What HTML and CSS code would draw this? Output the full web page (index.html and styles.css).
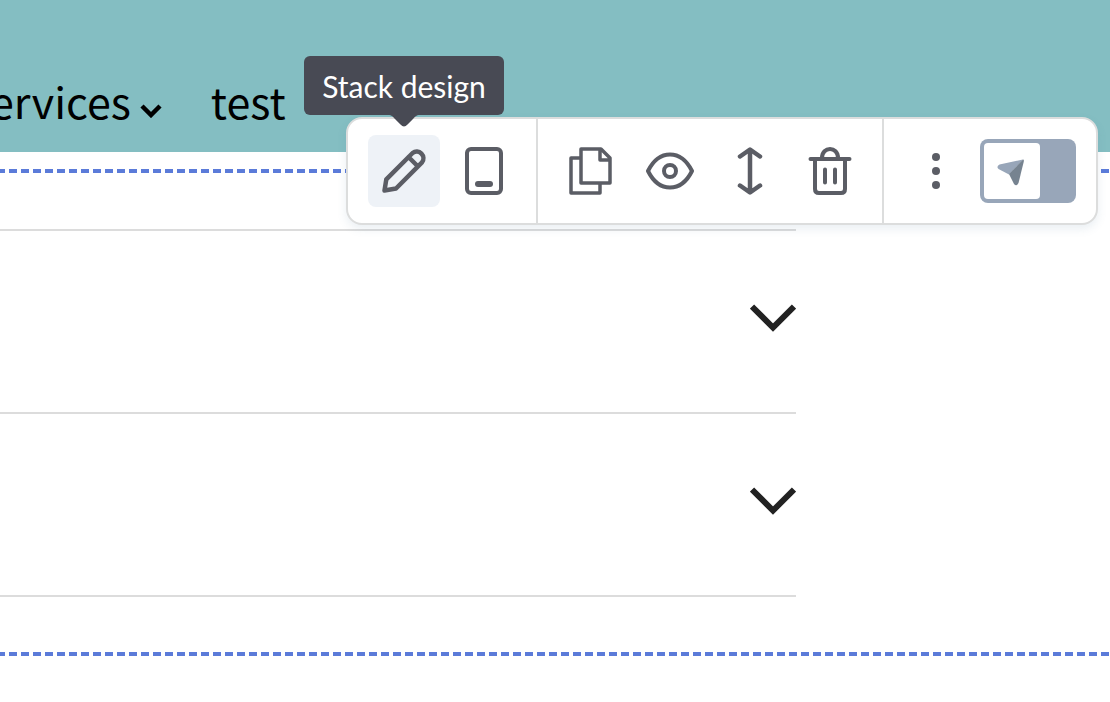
FILE: index.html
```html
<!DOCTYPE html>
<html lang="en">
<head>
<meta charset="utf-8">
<title>Page editor</title>
<link rel="stylesheet" href="styles.css">
</head>
<body>
<header class="site-header">
  <nav class="nav" aria-label="Main">
    <a class="nav-link" href="#services">ervices
      <svg class="nav-caret" viewBox="0 0 24 14" aria-hidden="true"><path d="M3 2l9 9 9-9" fill="none" stroke="currentColor" stroke-width="4.500"/></svg>
    </a>
    <a class="nav-link" href="#test">test</a>
  </nav>
</header>

<main class="stack">
  <div class="accordion">
    <button class="accordion-row" type="button" aria-label="Expand first item">
      <svg class="chevron" viewBox="0 0 46 28" aria-hidden="true"><path d="M2 2.500l21 21 21-21" fill="none" stroke="currentColor" stroke-width="6"/></svg>
    </button>
    <button class="accordion-row" type="button" aria-label="Expand second item">
      <svg class="chevron" viewBox="0 0 46 28" aria-hidden="true"><path d="M2 2.500l21 21 21-21" fill="none" stroke="currentColor" stroke-width="6"/></svg>
    </button>
  </div>

  <div class="toolbar" role="toolbar" aria-label="Stack tools">
    <div class="group group-first">
      <button class="tool tool-active" type="button" aria-labelledby="design-tip">
        <svg class="icon" viewBox="0 0 48 48" aria-hidden="true"><path stroke-width="4.500" d="M4.500 43.500L6.300 32.300L32.600 6A6.700 6.700 0 0 1 42 15.400L16 41.500zM28.500 10L38 19.500"/></svg>
        <span class="tooltip" id="design-tip" role="tooltip">Stack design
          <svg class="tooltip-arrow" viewBox="0 0 32 12" aria-hidden="true"><path d="M0 0c4 0 5 2 7 4l5.500 5.500q3.500 4 7 0L25 4c2-2 3-4 7-4z"/></svg>
        </span>
      </button>
      <button class="tool" type="button" aria-label="Mobile view">
        <svg class="icon" viewBox="0 0 48 48" aria-hidden="true"><rect x="7" y="2" width="34" height="44" rx="4"/><path d="M18 37h12" stroke-width="6"/></svg>
      </button>
    </div>
    <div class="group">
      <button class="tool" type="button" aria-label="Duplicate">
        <svg class="icon" viewBox="0 0 48 48" aria-hidden="true"><path stroke-width="3.500" d="M14 11H5v35h29V37M15 2h20l9 9v25H15zM34 2v11H44"/></svg>
      </button>
      <button class="tool" type="button" aria-label="Hide">
        <svg class="icon" viewBox="0 0 48 48" aria-hidden="true"><path d="M2 24C13 2 35 2 46 24C35 46 13 46 2 24z"/><circle cx="24" cy="24" r="6"/></svg>
      </button>
      <button class="tool" type="button" aria-label="Move">
        <svg class="icon" viewBox="0 0 48 48" aria-hidden="true"><path stroke-width="4.500" d="M24 3v42M14 9.500L24 2.500l10 7M14 38.500L24 45.500l10-7"/></svg>
      </button>
      <button class="tool" type="button" aria-label="Delete">
        <svg class="icon" viewBox="0 0 48 48" aria-hidden="true"><path d="M4.500 12h39M9 12v30q0 4 4 4h22q4 0 4-4V12M16 11c0-12 16-12 16 0M19 22.500v13M29 22.500v13"/></svg>
      </button>
    </div>
    <div class="group group-last">
      <button class="tool" type="button" aria-label="More options">
        <svg class="dots" viewBox="0 0 48 48" aria-hidden="true"><circle cx="24" cy="10" r="4"/><circle cx="24" cy="24" r="4"/><circle cx="24" cy="38" r="4"/></svg>
      </button>
      <label class="switch">
        <input class="switch-input" type="checkbox" role="switch" aria-label="Navigator mode">
        <span class="knob">
          <svg class="plane" viewBox="0 0 32 32" aria-hidden="true"><path fill="#98a6b9" d="M27 4.500L3.500 9.500Q0 11.500 2.500 14L13 19.500z"/><path fill="#768390" d="M27 4.500q1.200 0 .800 2L22.500 28q-2 4-4.500 1L13 19z"/></svg>
        </span>
      </label>
    </div>
  </div>
</main>
</body>
</html>
```
FILE: styles.css
```css
* {
  box-sizing: border-box;
}

body {
  margin: 0;
  background: #fff;
  overflow-x: hidden;
}

button {
  border: 0;
  margin: 0;
  padding: 0;
  background: none;
  cursor: pointer;
}

.site-header {
  padding: 68px 0 20px;
  background: #84bec2;
  overflow: hidden;
}

.nav {
  display: flex;
  gap: 48px;
  margin-left: -10px;
}

.nav-link {
  display: flex;
  align-items: center;
  gap: 8px;
  color: #000;
  font: 43px/64px "Noto Sans CJK JP", "Noto Sans", sans-serif;
  text-decoration: none;
}

.nav-caret {
  width: 24px;
  height: 14px;
  margin-top: 22px;
}

.stack {
  position: relative;
  margin-top: 17px;
  padding: 60px 0 59px;
  background:
    repeating-linear-gradient(90deg, #5b7bd9 0 8px, transparent 8px 12px) -3px 0 / 1200px 4px repeat-x,
    repeating-linear-gradient(90deg, #5b7bd9 0 8px, transparent 8px 12px) -3px 100% / 1200px 4px repeat-x;
}

.accordion {
  margin-right: 314px;
  border-top: 2px solid #dcdcdc;
}

.accordion-row {
  display: flex;
  align-items: center;
  justify-content: flex-end;
  width: 100%;
  height: 183px;
  padding-bottom: 8px;
  border-bottom: 2px solid #dcdcdc;
  color: #222;
}

.chevron {
  width: 46px;
  height: 28px;
}

.toolbar {
  position: absolute;
  top: -52px;
  right: 12px;
  display: flex;
  border: 2px solid #dcdddd;
  border-radius: 16px;
  background: #fff;
  box-shadow: 0 4px 10px rgba(80, 120, 160, 0.12);
}

.group {
  display: flex;
  align-items: center;
  gap: 8px;
  padding: 16px;
}

.group + .group {
  border-left: 2px solid #dcdddd;
}

.group-first {
  padding-left: 20px;
}

.group-last {
  padding-right: 20px;
}

.tool {
  position: relative;
  display: flex;
  align-items: center;
  justify-content: center;
  width: 72px;
  height: 72px;
  border-radius: 8px;
}

.tool-active {
  background: #eef2f7;
}

.icon,
.dots {
  width: 48px;
  height: 48px;
}

.icon {
  fill: none;
  stroke: #5b5d65;
  stroke-width: 4;
  stroke-linecap: round;
  stroke-linejoin: round;
}

.dots {
  fill: #5b5d65;
}

.tooltip {
  position: absolute;
  bottom: 92px;
  left: 50%;
  width: 200px;
  margin-left: -100px;
  padding: 12px 0 11px;
  border-radius: 6px;
  background: #484a54;
  color: #fff;
  font: 30px/36px Lato, "Noto Sans", sans-serif;
  text-align: center;
  white-space: nowrap;
}

.tooltip-arrow {
  position: absolute;
  top: 100%;
  left: 50%;
  width: 32px;
  height: 12px;
  margin-left: -16px;
  fill: #484a54;
}

.switch {
  position: relative;
  width: 96px;
  height: 64px;
  cursor: pointer;
}

.switch-input {
  appearance: none;
  display: block;
  width: 100%;
  height: 100%;
  margin: 0;
  border-radius: 8px;
  background: #98a6b9;
}

.knob {
  position: absolute;
  top: 4px;
  left: 4px;
  display: flex;
  align-items: center;
  justify-content: center;
  width: 56px;
  height: 56px;
  border-radius: 4px;
  background: #fff;
}

.plane {
  width: 32px;
  height: 32px;
}
```
